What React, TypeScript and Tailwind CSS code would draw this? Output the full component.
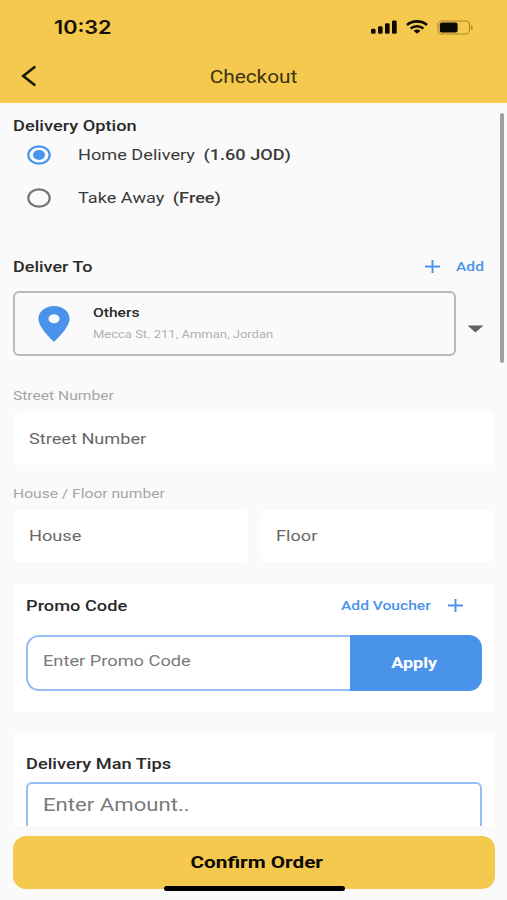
import clsx from "clsx";
import { ReactNode } from "react";

// Text with the wide letterforms used across the screen
function Wide({ className, children }: { className?: string; children: ReactNode }) {
  return (
    <span className={clsx("inline-block whitespace-pre leading-none", className)}>
      {children}
    </span>
  );
}

function PlusIcon() {
  return (
    <svg width="15" height="13" viewBox="0 0 15 13" fill="none" stroke="#4a93eb" strokeWidth="1.9">
      <path d="M0 6.500h15M7.500 0v13" />
    </svg>
  );
}

function StatusBar() {
  return (
    <div className="flex h-[54px] items-center pl-[54px] pr-[33px]">
      <Wide className="origin-left scale-x-[1.17] pt-px font-['Inter'] text-[18.5px] font-semibold text-[#171203]">
        10:32
      </Wide>
      <div className="ml-auto flex items-center">
        <svg width="26" height="14" viewBox="0 0 26 14" fill="#0c0a03">
          <rect x="0" y="8.7" width="4.6" height="5" rx="1.3" />
          <rect x="7" y="6.2" width="4.6" height="7.5" rx="1.3" />
          <rect x="14" y="3.3" width="4.6" height="10.4" rx="1.3" />
          <rect x="21" y="0.5" width="4.7" height="13.2" rx="1.3" />
        </svg>
        <svg className="ml-[9px]" width="22" height="14" viewBox="0 0 22 14" fill="none" stroke="#0c0a03">
          <path d="M1 4.9C6.400 .2 15.600 .2 21 4.900" strokeWidth="2.600" />
          <path d="M4.600 8.500c3.600-3.100 9.200-3.100 12.800 0" strokeWidth="2.400" />
          <path d="M11 13.800l-3.400-3.100c1.900-1.700 4.900-1.700 6.800 0z" fill="#0c0a03" stroke="none" />
        </svg>
        <svg className="ml-[9px]" width="37" height="15" viewBox="0 0 37 15" fill="none">
          <rect x="1" y="1" width="31.5" height="13" rx="3.600" stroke="#a8872c" strokeWidth="1.1" />
          <rect x="2.8" y="2.6" width="17.8" height="10" rx="2" fill="#0c0a03" />
          <path d="M34 5.200c2.400.7 2.400 4 0 4.700z" fill="#a8872c" />
        </svg>
      </div>
    </div>
  );
}

function Header() {
  return (
    <header className="h-[103px] bg-[#f4c94e]">
      <StatusBar />
      <div className="grid h-[45px] grid-cols-[54px_1fr_54px] items-center">
        <svg className="mb-px ml-[21px]" width="16" height="22" viewBox="0 0 16 22" fill="none" stroke="#1b1606" strokeWidth="2.600">
          <path d="M14.300 1.500L2.200 11l12.100 9.500" />
        </svg>
        <Wide className="scale-x-[1.19] pt-0.5 text-center text-[17.5px] text-[#3d3311]">Checkout</Wide>
      </div>
    </header>
  );
}

function RadioRow({ label, price, checked }: { label: string; price: string; checked?: boolean }) {
  return (
    <div className="flex h-[43px] items-center pl-[14px]">
      <svg className="mb-px" width="24" height="20" viewBox="0 0 24 20" fill="none">
        <ellipse cx="12" cy="10" rx="10.7" ry="8.700" stroke={checked ? "#4a93eb" : "#757575"} strokeWidth="2.200" />
        {checked && <ellipse cx="12" cy="10" rx="6" ry="5" fill="#4a93eb" />}
      </svg>
      <Wide className="ml-[27px] origin-left scale-x-[1.21] text-[15px] text-[#3a3a3a]">
        {label}
        <span className="ml-[7px] font-medium">{price}</span>
      </Wide>
    </div>
  );
}

function Field({ name }: { name: string }) {
  return (
    <div className="flex h-full flex-1 items-center rounded-md bg-white pl-4">
      <Wide className="origin-left scale-x-[1.21] pt-px text-[15px] text-[#686868]">{name}</Wide>
    </div>
  );
}

export default function App() {
  return (
    <div className="relative flex h-[900px] w-[507px] flex-col overflow-hidden bg-[#fafafa] font-['Roboto',sans-serif]">
      <Header />

      <main className="h-[723px] overflow-hidden pl-[13px] pr-3 pt-[12px]">
        <div className="flex h-5 items-center">
          <Wide className="origin-left scale-x-[1.215] pt-0.5 text-[15px] font-medium text-[#2a2a2a]">
            Delivery Option
          </Wide>
        </div>
        <div className="-mt-[1px]">
          <RadioRow label="Home Delivery" price="(1.60 JOD)" checked />
          <RadioRow label="Take Away" price="(Free)" />
        </div>

        <div className="mt-[36px] flex h-5 items-center">
          <Wide className="w-[412px] origin-left scale-x-[1.2] pt-0.5 text-[15px] font-medium text-[#2a2a2a]">
            Deliver To
          </Wide>
          <PlusIcon />
          <Wide className="ml-4 w-6 origin-left scale-x-[1.2] text-[13px] font-medium text-[#4a93eb]">Add</Wide>
        </div>

        <div className="mt-[15px] flex items-center">
          <div className="flex h-[65px] w-[443px] items-center rounded-md border-2 border-[#b9b9b9] pl-[23px]">
            <svg width="32" height="36" viewBox="0 0 32 36" fill="#4a93eb" fillRule="evenodd">
              <path d="M16 0C7.300 0 .4 5.600 .4 12.800 .4 22 16 36 16 36S31.600 22 31.600 12.800C31.600 5.600 24.700 0 16 0zM16 8.300a5.500 4.500 0 1 1 0 9 5.500 4.500 0 0 1 0-9z" />
            </svg>
            <div className="ml-[23px] flex flex-col gap-[9px]">
              <Wide className="origin-left scale-x-[1.2] text-[13px] font-medium text-[#2a2a2a]">Others</Wide>
              <Wide className="origin-left scale-x-[1.13] pt-px text-[11.5px] text-[#b0b0b0]">
                Mecca St. 211, Amman, Jordan
              </Wide>
            </div>
          </div>
          <svg className="ml-[11px] mt-[11px]" width="17" height="8" viewBox="0 0 17 8" fill="#616161">
            <path d="M.5.500h16L8.500 7.500z" />
          </svg>
        </div>

        <div className="mt-[29px] flex h-5 items-center">
          <Wide className="origin-left scale-x-[1.2] text-[13px] text-[#a5a5a5]">Street Number</Wide>
        </div>
        <div className="mt-[7px] flex h-[53px]">
          <Field name="Street Number" />
        </div>

        <div className="mt-[18px] flex h-5 items-center">
          <Wide className="origin-left scale-x-[1.2] text-[13px] text-[#a5a5a5]">House / Floor number</Wide>
        </div>
        <div className="mt-[7px] flex h-[52px] gap-3">
          <Field name="House" />
          <Field name="Floor" />
        </div>

        <section className="mt-[22px] h-[128px] rounded-sm bg-white px-[13px] pt-[11px]">
          <div className="flex h-5 items-center">
            <Wide className="w-[315px] origin-left scale-x-[1.215] pt-0.5 text-[15px] font-medium text-[#2a2a2a]">
              Promo Code
            </Wide>
            <Wide className="w-[107px] origin-left scale-x-[1.2] text-[13px] font-medium text-[#4a93eb]">
              Add Voucher
            </Wide>
            <PlusIcon />
          </div>
          <div className="mt-5 flex h-14">
            <div className="flex flex-1 items-center rounded-l-[13px] border-2 border-r-0 border-[#94bff2] pb-1 pl-[15px]">
              <Wide className="origin-left scale-x-[1.215] text-[15px] text-[#7a7a7a]">Enter Promo Code</Wide>
            </div>
            <div className="flex w-[132px] items-center justify-center rounded-r-[13px] bg-[#4a93eb] pr-[3px]">
              <Wide className="scale-x-[1.2] text-[15px] font-bold text-white">Apply</Wide>
            </div>
          </div>
        </section>

        <section className="mt-[21px] h-[150px] rounded-sm bg-white px-[13px] pt-5">
          <div className="flex h-5 items-center">
            <Wide className="origin-left scale-x-[1.215] pt-0.5 text-[15px] font-medium text-[#2a2a2a]">
              Delivery Man Tips
            </Wide>
          </div>
          <div className="mt-[9px] flex h-14 items-start rounded-md border-2 border-[#94bff2] pl-[15px] pt-3">
            <Wide className="origin-left scale-x-[1.23] text-[18px] text-[#7a7a7a]">Enter Amount..</Wide>
          </div>
        </section>
      </main>

      <footer className="pl-[13px] pr-3 pt-[10px]">
        <div className="flex h-[53px] items-center justify-center rounded-[13px] bg-[#f4c94e]">
          <Wide className="scale-x-[1.22] pl-1 text-[17px] font-bold text-[#0c0a03]">Confirm Order</Wide>
        </div>
      </footer>

      {/* overlays: scrollbar and home indicator */}
      <div className="absolute right-[3px] top-[113px] h-[250px] w-1 rounded-full bg-[#a0a0a0]" />
      <div className="absolute left-[164px] top-[886px] h-[5px] w-[181px] rounded-full bg-black" />
    </div>
  );
}
